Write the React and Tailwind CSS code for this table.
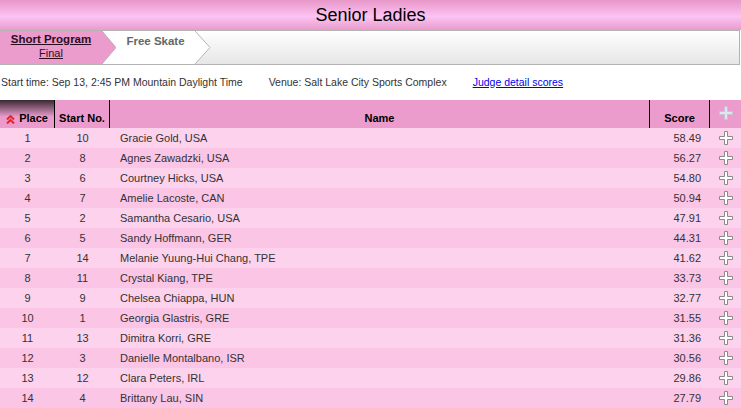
import React from 'react'

const skaters = [
  { place: 1, start: 10, name: 'Gracie Gold, USA', score: '58.49' },
  { place: 2, start: 8, name: 'Agnes Zawadzki, USA', score: '56.27' },
  { place: 3, start: 6, name: 'Courtney Hicks, USA', score: '54.80' },
  { place: 4, start: 7, name: 'Amelie Lacoste, CAN', score: '50.94' },
  { place: 5, start: 2, name: 'Samantha Cesario, USA', score: '47.91' },
  { place: 6, start: 5, name: 'Sandy Hoffmann, GER', score: '44.31' },
  { place: 7, start: 14, name: 'Melanie Yuung-Hui Chang, TPE', score: '41.62' },
  { place: 8, start: 11, name: 'Crystal Kiang, TPE', score: '33.73' },
  { place: 9, start: 9, name: 'Chelsea Chiappa, HUN', score: '32.77' },
  { place: 10, start: 1, name: 'Georgia Glastris, GRE', score: '31.55' },
  { place: 11, start: 13, name: 'Dimitra Korri, GRE', score: '31.36' },
  { place: 12, start: 3, name: 'Danielle Montalbano, ISR', score: '30.56' },
  { place: 13, start: 12, name: 'Clara Peters, IRL', score: '29.86' },
  { place: 14, start: 4, name: 'Brittany Lau, SIN', score: '27.79' }
]

function PlusIcon({ fill = '#ffffff', stroke = '#8a8a8a' }) {
  return (
    <svg width="14" height="14" viewBox="0 0 14 14">
      <polygon
        points="5.5,0.5 8.5,0.5 8.5,5.5 13.5,5.5 13.5,8.5 8.5,8.5 8.5,13.5 5.5,13.5 5.5,8.5 0.5,8.5 0.5,5.5 5.5,5.5"
        fill={fill}
        stroke={stroke}
        strokeWidth="1"
      />
    </svg>
  )
}

function SortUp() {
  return (
    <svg width="9" height="9" viewBox="0 0 9 9">
      <path d="M1 4.5 L4.5 1 L8 4.5" fill="none" stroke="#e8242b" strokeWidth="2" />
      <path d="M1 8.5 L4.5 5 L8 8.5" fill="none" stroke="#e8242b" strokeWidth="2" />
    </svg>
  )
}

export default function App() {
  return (
    <div className="w-[741px] h-[408px] overflow-hidden bg-white text-[11px] text-[#333]" style={{ fontFamily: '"Liberation Sans", Arial, sans-serif' }}>
      <div className="h-[30px] flex items-center justify-center bg-[linear-gradient(#e897c8,#fcc3f3_55%,#e99ccb)] text-[18px] text-black">
        Senior Ladies
      </div>

      <div className="w-[740px] h-[35px] flex border-t border-b border-r border-[#b3b3b3] bg-[linear-gradient(#ffffff,#e6e6e6)]">
        <div className="w-[102px] flex flex-col items-center bg-[#eb9bcc] pt-[1px] leading-[14px] text-[#2a0e1e]">
          <span className="text-[11.5px] font-bold underline">Short Program</span>
          <span className="text-[11px] underline">Final</span>
        </div>
        <svg width="14" height="33" viewBox="0 0 14 33" className="shrink-0">
          <rect width="14" height="33" fill="#ffffff" />
          <polygon points="0,0 14,16.5 0,33" fill="#eb9bcc" />
          <polyline points="0,0 14,16.5 0,33" fill="none" stroke="#b5b5b5" strokeWidth="1" />
        </svg>
        <div className="w-[79px] bg-white pt-[2px] text-center text-[11.5px] font-bold text-[#666]">Free Skate</div>
        <svg width="16" height="33" viewBox="0 0 16 33" className="shrink-0">
          <polygon points="0,0 15,16.5 0,33" fill="#ffffff" />
          <polyline points="0,0 15,16.5 0,33" fill="none" stroke="#b5b5b5" strokeWidth="1" />
        </svg>
      </div>

      <div className="h-[35px] flex items-center gap-[26px] pl-[1px] text-[10.5px]">
        <span>Start time: Sep 13, 2:45 PM Mountain Daylight Time</span>
        <span>Venue: Salt Lake City Sports Complex</span>
        <span className="text-[#0000ee] underline">Judge detail scores</span>
      </div>

      <div className="grid grid-cols-[55px_55px_540px_60px_1fr]">
        <div className="h-[28px] flex items-end justify-center gap-[4px] pb-[2px] border-r border-black bg-[linear-gradient(#3a2832,#eb9bcc_60%)] font-bold text-black">
          <span className="mb-[2px]"><SortUp /></span>
          <span>Place</span>
        </div>
        <div className="h-[28px] flex items-end justify-center pb-[2px] border-r border-black bg-[#eb9bcc] font-bold text-black">Start No.</div>
        <div className="h-[28px] flex items-end justify-center pb-[2px] border-r border-black bg-[#eb9bcc] font-bold text-black">Name</div>
        <div className="h-[28px] flex items-end justify-center pb-[2px] border-r border-black bg-[#eb9bcc] font-bold text-black">Score</div>
        <div className="h-[28px] flex items-start justify-center pt-[6px] bg-[#eb9bcc]">
          <PlusIcon fill="#e4e4ee" stroke="#c4c4d4" />
        </div>

        {skaters.map((s, i) => {
          const bg = i % 2 === 0 ? 'bg-[#fcd2ed]' : 'bg-[#fbc5e6]'
          return (
            <React.Fragment key={s.place}>
              <div className={`h-[20px] flex items-center justify-center ${bg}`}>{s.place}</div>
              <div className={`h-[20px] flex items-center justify-center ${bg}`}>{s.start}</div>
              <div className={`h-[20px] flex items-center pl-[10px] ${bg}`}>{s.name}</div>
              <div className={`h-[20px] flex items-center justify-end pr-[9px] ${bg}`}>{s.score}</div>
              <div className={`h-[20px] flex items-center justify-center ${bg}`}>
                <PlusIcon />
              </div>
            </React.Fragment>
          )
        })}
      </div>
    </div>
  )
}
